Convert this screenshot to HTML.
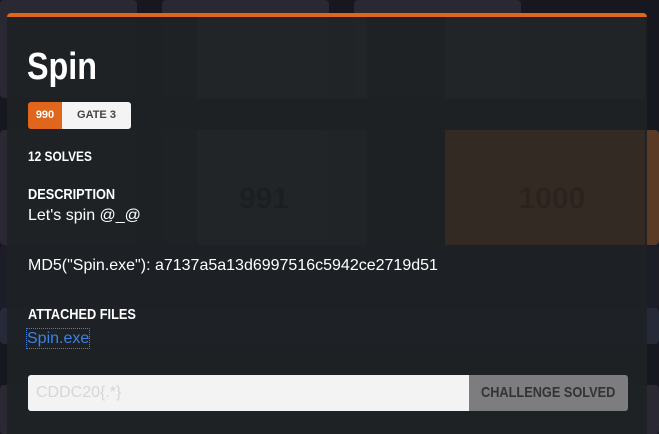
<!DOCTYPE html>
<html style="height:434px;overflow:hidden"><head><style>
body{margin:0;width:659px;height:434px;background:#16171f;position:relative;overflow:hidden;font-family:"Liberation Sans",sans-serif}
.c{position:absolute;background:#2a2832;border-radius:4px}
.m{position:absolute;left:7px;top:13px;width:640px;height:421px;background:rgba(29,34,37,0.95);border-top:4px solid #e0661e;border-radius:4px 4px 0 0}
.t{position:absolute;color:#fff}
.h{font-family:"Liberation Sans",sans-serif;font-weight:bold}
.n{transform:scaleX(0.85);transform-origin:0 0;white-space:nowrap}
</style></head><body>
<div class="c" style="left:0;top:0;width:137px;height:98px"></div>
<div class="c" style="left:162px;top:0;width:167px;height:98px"></div>
<div class="c" style="left:354px;top:0;width:167px;height:98px"></div>
<div class="c" style="left:0;top:130px;width:137px;height:115px"></div>
<div class="c" style="left:162px;top:130px;width:167px;height:115px"></div>
<div class="c" style="left:446px;top:130px;width:213px;height:115px;background:#5a3a24"></div>
<div class="c" style="left:0;top:245px;width:659px;height:65px;background:#1c1d27"></div>
<div class="c" style="left:0;top:308px;width:659px;height:36px;background:#262a38"></div>
<div class="c" style="left:0;top:385px;width:659px;height:49px"></div>
<div class="m">
<div style="position:absolute;left:190px;top:0;width:170px;height:82px;background:rgba(255,255,255,0.015)"></div>
<div style="position:absolute;left:438px;top:0;width:200px;height:82px;background:rgba(255,255,255,0.015)"></div>
<div style="position:absolute;left:190px;top:113px;width:170px;height:115px;background:rgba(255,255,255,0.015)"></div>
<div style="position:absolute;left:438px;top:113px;width:200px;height:115px;background:rgba(200,100,40,0.12)"></div>
<div style="position:absolute;left:197px;top:165px;width:120px;text-align:center;font-size:30px;color:rgba(0,0,0,0.15)" class="h">991</div>
<div style="position:absolute;left:480px;top:165px;width:130px;text-align:center;font-size:30px;color:rgba(0,0,0,0.15)" class="h">1000</div>
</div>
<div class="t h n" style="left:27px;top:45px;font-size:38px;line-height:44px">Spin</div>
<div style="position:absolute;left:28px;top:102px;height:27px;display:flex;border-radius:3px;overflow:hidden;font-size:11px" class="h">
<div style="background:#e0661e;color:#fff;width:34px;line-height:27px;text-align:center">990</div>
<div style="background:#f4f4f4;color:#444;width:69px;line-height:27px;text-align:center">GATE 3</div></div>
<div class="t h n" style="left:28px;top:148px;font-size:14px">12 SOLVES</div>
<div class="t h n" style="left:28px;top:186px;font-size:15px">DESCRIPTION</div>
<div class="t" style="left:28px;top:207px;font-size:16px">Let's spin @_@</div>
<div class="t" style="left:28px;top:257px;font-size:16px">MD5("Spin.exe"): a7137a5a13d6997516c5942ce2719d51</div>
<div class="t h n" style="left:28px;top:306px;font-size:15px">ATTACHED FILES</div>
<div class="t" style="left:27px;top:329px;font-size:16px;color:#3b82e0;outline:1px dotted #3b82e0;line-height:19px">Spin.exe</div>
<div style="position:absolute;left:28px;top:375px;width:441px;height:36px;background:#f3f3f3;border-radius:3px 0 0 3px;color:#d6d6d6;font-size:16px;line-height:36px;padding-left:8px;box-sizing:border-box">CDDC20{.*}</div>
<div style="position:absolute;left:469px;top:375px;width:159px;height:36px;background:#7d7c7e;border-radius:0 3px 3px 0"></div>
<div class="h n" style="position:absolute;left:481px;top:375px;color:#333;font-size:15px;line-height:36px">CHALLENGE SOLVED</div>
</body></html>
